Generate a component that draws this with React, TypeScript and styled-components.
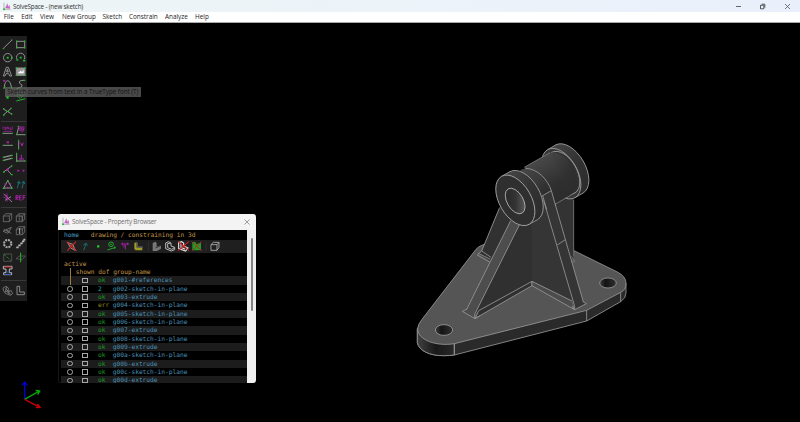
import React from "react";
import styled, { createGlobalStyle } from "styled-components";

const Global = createGlobalStyle`
  * { box-sizing: border-box; }
  body { margin: 0; background: #000; overflow: hidden; }
`;

const UI_FONT = `"Open Sans", "Noto Sans", sans-serif`;

const Shell = styled.div`
  display: flex;
  flex-direction: column;
  width: 800px;
  height: 422px;
  background: #000;
  font-family: ${UI_FONT};
`;
const TitleBar = styled.header`
  display: flex;
  align-items: center;
  height: 12px;
  padding-left: 3px;
  background: linear-gradient(90deg, #edf5f6, #ecf3f9 50%, #e9f0fb);
  font-size: 6.3px;
  color: #333;
`;
const TitleText = styled.span<{ $spacing: number }>`
  flex: 1;
  padding-left: 2px;
  white-space: nowrap;
  letter-spacing: ${(p) => p.$spacing}px;
`;
const WindowButtons = styled.div`
  display: flex;
  align-items: center;
  gap: 17.4px;
  padding-right: 9.5px;
`;
const MenuBar = styled.nav`
  display: flex;
  align-items: center;
  height: 10.5px;
  padding-left: 3.7px;
  background: #fff;
  border-bottom: 0.5px solid #aaa;
  font-size: 6.4px;
  color: #1c1c1c;
`;
const MenuItem = styled.span<{ $w: number }>`
  width: ${(p) => p.$w}px;
  white-space: nowrap;
  line-height: 9px;
`;
const Canvas = styled.main`
  position: relative;
  flex: 1;
  background: #000;
`;
const Model = styled.svg`
  position: absolute;
  left: 410px;
  top: 117.5px;
  width: 220px;
  height: 220px;
`;
const Gizmo = styled.svg`
  position: absolute;
  left: 10px;
  top: 347.5px;
  width: 50px;
  height: 50px;
`;
const Toolbox = styled.aside`
  width: 27.3px;
  height: 265px;
  margin-top: 13.5px;
  padding: 2px 0 0 0.5px;
  background: #1e1e1e;
  float: left;
`;
const ToolGroup = styled.div`
  display: grid;
  grid-template-columns: 13.3px 13.3px;
  grid-auto-rows: 13.35px;
`;
const Divider = styled.hr`
  height: 1px;
  margin: 2.6px 1px 2.7px 0.5px;
  border: 0;
  background: #383838;
`;
const Glyph = styled.svg`
  width: 13px;
  height: 13.35px;
  fill: none;
  stroke-width: 3;
`;
const Tip = styled.div`
  position: absolute;
  left: 5px;
  top: 64px;
  width: 136px;
  height: 10px;
  padding-left: 2.3px;
  background: rgba(106, 106, 106, 0.68);
  color: #141414;
  font-size: 6.3px;
  letter-spacing: -0.04px;
  line-height: 9.5px;
  white-space: nowrap;
`;
const Browser = styled.section`
  position: absolute;
  left: 58px;
  top: 191.5px;
  width: 197.5px;
  height: 169px;
  display: flex;
  flex-direction: column;
  overflow: hidden;
  border-radius: 3px;
  background: #000;
  box-shadow: inset 0 0 0 0.5px #2c2c2c;
`;
const BrowserTitle = styled.header`
  display: flex;
  align-items: center;
  flex: none;
  height: 15.5px;
  padding: 0 6px 0 4px;
  background: #f3f3f3;
  color: #707070;
  font-size: 6.3px;
`;
const BrowserBody = styled.div`
  display: flex;
  flex: 1;
  min-height: 0;
`;
const Listing = styled.div`
  flex: 1;
  padding-left: 2.7px;
  overflow: hidden;
  font: 6.23px/8.33px "DejaVu Sans Mono", monospace;
`;
const Scroll = styled.div`
  width: 9px;
  padding: 8px 0 0 4.2px;
  background: #f0f0f0;
`;
const Thumb = styled.div`
  width: 2px;
  height: 73px;
  border-radius: 1px;
  background: #858585;
`;
const Line = styled.div<{ $indent: number; $h?: number }>`
  display: flex;
  align-items: center;
  height: ${(p) => p.$h ?? 8.33}px;
  padding-left: ${(p) => p.$indent}px;
  color: #c4984a;
  white-space: pre;
`;
const Home = styled.span`
  width: 26.7px;
  color: #4c9fc4;
`;
const IconStrip = styled.div`
  display: flex;
  height: 12.8px;
  margin-bottom: 6.6px;
  background: #1f1f1f;
`;
const Strip = styled.svg`
  width: 160px;
  height: 12.8px;
  fill: none;
`;
const Row = styled.div<{ $odd: boolean }>`
  display: grid;
  grid-template-columns: 16.8px 20.6px 14.6px 1fr;
  align-items: center;
  height: 8.33px;
  background: ${(p) => (p.$odd ? "#1c1c1c" : "#000")};
  white-space: nowrap;
`;
const Mark = styled.span<{ $round?: boolean; $hidden?: boolean }>`
  width: 5.6px;
  height: 5.6px;
  margin-left: ${(p) => (p.$round ? 6.5 : 4.8)}px;
  border: 1.1px solid #a8a8a8;
  border-radius: ${(p) => (p.$round ? "50%" : "0")};
  visibility: ${(p) => (p.$hidden ? "hidden" : "visible")};
`;
const Dof = styled.span<{ $c: string }>`
  color: ${(p) => p.$c};
`;
const Name = styled.span`
  color: #4a92b8;
`;
const ActiveBar = styled.i`
  position: absolute;
  left: 12.1px;
  top: 53.5px;
  width: 1px;
  height: 17px;
  background: #a07c38;
`;

const G = "#22b52e";
const W = "#909090";
const M = "#b022b0";

const Logo = () => (
  <svg width="8" height="9" viewBox="0 0 24 27" fill="none">
    <path d="M3 2V22H23" stroke="#999" strokeWidth="2" />
    <path d="M7 19L13 5L16 19M14 19L19 10L21 19Z" fill="#c568c8" stroke="#b85cbc" />
    <circle cx="3" cy="22" r="3" fill="#28b52c" />
  </svg>
);

const cube = (
  <path d="M7 15L15 8H32V24L25 32H7ZM7 15H25V32M25 15L32 8" stroke="#7a7a7a" strokeWidth="2.2" />
);

const tools: React.ReactNode[][] = [
  [
    <><path d="M7 31L33 6" stroke={W} /><path d="M5 32h5M30 6h4" stroke={G} /></>,
    <><rect x="8" y="10" width="24" height="19" stroke={W} /><path d="M6 10h4M30 10h4M6 29h4M30 29h4" stroke={G} strokeWidth="5" /></>,
    <><circle cx="20" cy="20" r="12.5" stroke={W} /><path d="M17 20h6M31 20h4" stroke={G} strokeWidth="6" /></>,
    <><path d="M9 25A12.5 12.5 0 1 1 31 25" stroke={W} /><path d="M17 20h6M7 27h6M27 29h7" stroke={G} strokeWidth="5" /></>,
    <path d="M7 33L16 7H22L32 33H26L23 26H15L12 33ZM17 21L19 13L22 21Z" stroke="#aaa" strokeWidth="2.4" />,
    <><rect x="7" y="9" width="26" height="22" fill="#999" stroke={W} /><path d="M11 25L20 17L24 21L29 14V25Z" fill="#fff" /><path d="M5 9h5M30 9h5M5 31h5M30 31h5" stroke={G} strokeWidth="4" /></>,
    <><path d="M9 31Q12 8 20 8T32 31" stroke={W} /><path d="M8 33l4-8M30 24l4 8" stroke={G} /><path d="M6 8h7M9 5v7" stroke={M} /></>,
    <><path d="M32 7Q12 6 17 16Q35 25 10 31" stroke={W} /><path d="M28 7h6M7 31h6" stroke={G} /></>,
    <path d="M16 19h7" stroke="#10c81c" strokeWidth="8" />,
    <><circle cx="18" cy="13" r="8" stroke={G} strokeDasharray="4 2" /><path d="M16 13h5" stroke={G} /><path d="M7 30L34 23" stroke={G} /></>,
    <><path d="M7 12L32 27M8 29L31 10" stroke={W} /><path d="M16 19h8M6 11h4M30 27h4M28 10h4M6 30h5" stroke={G} strokeWidth="4" /></>,
  ],
  [
    <><path d="M6 7v9M34 7v9M7 22H34" stroke={M} strokeWidth="2" /><path d="M10 10h4v6h-4M18 16v-6h4v6M27 10v6h5" stroke={M} strokeWidth="2.5" /><path d="M6 28H34" stroke={W} /><path d="M4 28h4M32 28h4" stroke={G} /></>,
    <><path d="M8 32L14 10M8 32H33" stroke={W} /><path d="M11 9h21M17 19v-7h6v7h-6M27 10v10M22 24q9-2 8-12" stroke={M} strokeWidth="2.5" /><path d="M6 32h4M11 7h5M31 32h4" stroke={G} /></>,
    <><path d="M7 22H33" stroke={W} /><path d="M18 16v-6M22 10v6M18 13h4" stroke={M} /><path d="M5 22h5M31 22h5" stroke={G} /></>,
    <><path d="M14 8V32" stroke={W} /><path d="M20 14l4 10l4-10" stroke={M} /><path d="M14 5v5M14 30v5" stroke={G} /></>,
    <><path d="M7 19L32 13M7 28L32 22" stroke={W} strokeWidth="4" /><path d="M5 19h6M30 13h6M5 28h6M30 22h6" stroke={G} /></>,
    <><path d="M8 8V30H33" stroke={W} /><path d="M22 11v13M15 24h15" stroke={M} /><path d="M8 5v5M6 31h5M31 30h5" stroke={G} /></>,
    <><path d="M9 23L32 6M17 16L32 32" stroke={W} /><path d="M15 17h8" stroke={M} strokeWidth="5" /><path d="M30 6h4M29 32h6M6 24h5" stroke={G} strokeWidth="4" /></>,
    <path d="M10 20h6M12 17v6M26 20h6M28 17v6" stroke={M} />,
    <><path d="M20 8L8 30H33Z" stroke={W} /><path d="M10 18l6 3M25 20l6-3M20 26v7" stroke={M} /><path d="M18 8h5M5 31h6M30 31h5" stroke={G} strokeWidth="4" /></>,
    <path d="M10 31L15 11M24 31L29 11M9 15l7-5l2 8M23 15l7-5l2 8" stroke="#176d72" />,
    <><path d="M8 9L33 33M12 28L30 17" stroke={W} /><path d="M7 18L30 28M18 7v25M10 10l10 6" stroke={M} strokeWidth="2.3" /></>,
    <path d="M6 27V14h6v6H6l6 7M23 14h-7v13h7M16 20h6M27 27V14h7M27 20h6" stroke={M} strokeWidth="2.7" />,
  ],
  [
    cube,
    <>{cube}<path d="M16 10v20M20 17h5v10h-5" stroke="#777" strokeWidth="2" /></>,
    <path d="M6 22L31 10L21 28L6 22M17 17L31 29M8 16L25 25" stroke="#777" strokeWidth="2.5" />,
    <>{cube}<path d="M17 12v18" stroke="#aaa" /></>,
    <circle cx="20" cy="20" r="11" stroke="#aaa" strokeWidth="6" strokeDasharray="6 2.6" />,
    <path d="M7 31h7M13 25h7M19 19h7M24 13h7M28 8h6" stroke="#bbb" strokeWidth="5" />,
    <><path d="M8 9H32V31H8Z" stroke="#4c4c4c" /><path d="M9 10L31 30" stroke={G} strokeDasharray="3 3" /></>,
    <><path d="M6 23L16 15H34L24 26Z" stroke="#666" strokeWidth="2" /><path d="M20 5V34" stroke={G} /></>,
    <><path d="M7 7H33V15H25V26H32V32H8V26H15V15H7Z" stroke="#bbb" /><path d="M9 9H31" stroke="#c22" /><path d="M15 24H25M10 31H30" stroke="#35b" /></>,
  ],
  [
    <path d="M6 12L15 7L23 13L20 22L31 20L35 29L28 34L13 28L8 21ZM14 13L23 24M12 20L30 31M17 8L13 25M25 20L23 31" stroke="#858585" strokeWidth="2.3" />,
    <path d="M9 7H17V24H31V32H9Z" stroke="#999" strokeWidth="2.6" />,
  ],
];

const menus: [string, number][] = [
  ["File", 17.6], ["Edit", 18.7], ["View", 22], ["New Group", 40.5],
  ["Sketch", 26.5], ["Constrain", 36], ["Analyze", 30], ["Help", 20],
];

const groups: [string, string][] = [
  ["ok", "g001-#references"], ["2", "g002-sketch-in-plane"], ["ok", "g003-extrude"],
  ["err", "g004-sketch-in-plane"], ["ok", "g005-sketch-in-plane"], ["ok", "g006-sketch-in-plane"],
  ["ok", "g007-extrude"], ["ok", "g008-sketch-in-plane"], ["ok", "g009-extrude"],
  ["ok", "g00a-sketch-in-plane"], ["ok", "g00b-extrude"], ["ok", "g00c-sketch-in-plane"],
  ["ok", "g00d-extrude"],
];
const dofColor = (s: string) => (s === "ok" ? "#1a9c24" : s === "err" ? "#8f8a14" : "#18a8a8");

/* Disc seen along the bore axis, which rises to the right at 30 degrees. */
const Disc = ({ x, y, r, fill, stroke = "#9c9c9c" }: { x: number; y: number; r: number; fill: string; stroke?: string }) => (
  <ellipse cx={x} cy={y} rx={r * 0.577} ry={r} transform={`rotate(-30 ${x} ${y})`} fill={fill} stroke={stroke} />
);

const Bracket = () => (
  <Model viewBox="0 0 660 660" fill="none" stroke="#989898" strokeWidth="2.5" strokeLinejoin="round">
    <defs>
      <linearGradient id="tube" gradientUnits="userSpaceOnUse" x1="370" y1="60" x2="440" y2="185">
        <stop offset="0" stopColor="#494949" /><stop offset=".35" stopColor="#3c3c3c" /><stop offset=".65" stopColor="#303030" /><stop offset="1" stopColor="#2c2c2c" />
      </linearGradient>
      <linearGradient id="rim" gradientUnits="userSpaceOnUse" x1="285" y1="95" x2="375" y2="250">
        <stop offset="0" stopColor="#484848" /><stop offset=".5" stopColor="#343434" /><stop offset="1" stopColor="#2a2a2a" />
      </linearGradient>
      <linearGradient id="rimBack" gradientUnits="userSpaceOnUse" x1="425" y1="15" x2="515" y2="170">
        <stop offset="0" stopColor="#484848" /><stop offset=".5" stopColor="#343434" /><stop offset="1" stopColor="#2a2a2a" />
      </linearGradient>
      <linearGradient id="bore" x1="0" x2="1" y1="0" y2="1">
        <stop offset="0" stopColor="#252525" /><stop offset=".5" stopColor="#333" /><stop offset="1" stopColor="#666" />
      </linearGradient>
      <linearGradient id="hole"><stop offset="0" stopColor="#3c3c3c" /><stop offset=".35" stopColor="#141414" /><stop offset="1" stopColor="#303030" /></linearGradient>
      <linearGradient id="corner"><stop offset="0" stopColor="#424242" /><stop offset=".5" stopColor="#181818" /><stop offset="1" stopColor="#292929" /></linearGradient>
    </defs>
    <path d="M22 565V608C27 633 60 647 100 647Q119 647 133 645L530 543L632 485Q648 474 648 460V430Z" fill="#2a2a2a" />
    <path d="M22 567V608C27 633 60 647 100 647Q119 647 133 645V611Z" fill="url(#corner)" />
    <path d="M23 568Q22 555 36 538L198 328Q204 321 213 317L350 260L492 332L622 396Q648 409 648 430Q648 450 632 457L530 511L133 611C78 620 25 600 23 568Z" fill="#555" />
    <path d="M133 611V645M530 511V543M632 457V485" />
    <ellipse cx="102" cy="570" rx="26" ry="16" fill="url(#hole)" />
    <ellipse cx="594" cy="429" rx="25" ry="15" fill="url(#hole)" />

    <path d="M268 200L215 333L206 342L243 364L330 240Z" fill="#313131" stroke="none" />
    <path d="M268 205L215 333L243 352M215 333L202 345L238 366M205 340L241 358" />
    <path d="M395 170L492 172V352L480 362L400 250Z" fill="#333" stroke="none" />
    <path d="M491 180V350M484 349L495 364L486 367" stroke="#777" />
    <path d="M326 250L366 220V425L210 510L194 524Z" fill="#303030" stroke="none" />
    <path d="M365 200L400 170L495 490L366 425Z" fill="#353535" stroke="none" />
    <path d="M206 512L366 424V437L196 535Z" fill="#303030" />
    <path d="M366 424L488 484L492 508L366 437Z" fill="#4c4c4c" />
    <path d="M302 242L328 255L194 523V534L157 514L169 508Z" fill="#4d4d4d" stroke="none" />
    <path d="M302 242L169 510M328 255L194 523V534M169 508L157 514L195 536L210 527" />
    <path d="M397 168L418 153L424 152L520 486L529 491L494 509Z" fill="#353535" stroke="none" />
    <path d="M397 168L494 499V509L529 491L520 486L424 152M442 315L466 299M486 498L494 509" />

    <Disc x={478} y={87} r={83} fill="url(#rimBack)" />
    <path d="M412.500 29L436.500 15L519.500 159L495.500 173Z" fill="url(#rimBack)" stroke="none" />
    <Disc x={454} y={101} r={83} fill="#383838" />
    <path d="M412.500 29L436.500 15M495.500 173L519.500 159" />
    <Disc x={460} y={98} r={70} fill="#303030" />
    <Disc x={453} y={100} r={69} fill="url(#tube)" stroke="none" />
    <path d="M343 81L419 38L489 160L413 203Z" fill="url(#tube)" stroke="none" />
    <path d="M420 38L343 82M435 193L489 162" stroke="#777" />
    <path d="M397 167L424 152L436 193L412 207Z" fill="#353535" stroke="none" />
    <path d="M398 167L410 208M424 152L437 198" />
    <path d="M330 90L350 84C385 86 413 119 424 151L398 167Z" fill="url(#tube)" stroke="none" />
    <path d="M346 85C383 85 414 120 424 152L396 168" />

    <Disc x={341} y={167} r={83} fill="url(#rim)" />
    <path d="M274.500 109L299.500 95L382.500 239L357.500 253Z" fill="url(#rim)" stroke="none" />
    <path d="M274.500 109L299.500 95M357.500 253L382.500 239" />
    <Disc x={316} y={181} r={83} fill="#2f2f2f" stroke="#a8a8a8" />
    <Disc x={315.5} y={183} r={42} fill="url(#bore)" stroke="#b0b0b0" />
  </Model>
);

const PropertyBrowser = () => (
  <Browser>
    <BrowserTitle>
      <Logo />
      <TitleText $spacing={-0.18}>SolveSpace - Property Browser</TitleText>
      <svg width="6" height="6" viewBox="0 0 6 6"><path d="M.5.5l5 5M5.5.5l-5 5" stroke="#777" strokeWidth=".7" /></svg>
    </BrowserTitle>
    <BrowserBody>
      <Listing>
        <Line $indent={3.3} $h={10.7}><Home>home</Home>drawing / constraining in 3d</Line>
        <IconStrip>
          <Strip viewBox="20 90 480 38.4" strokeWidth="2.7">
            <path d="M40 98L55 103L63 121L49 114Z" stroke="#aaa" /><path d="M37 95L66 123M65 95L39 122" stroke="#d62828" strokeWidth="3.2" />
            <path d="M88 121L95 101M87 105l9-5l3 7" stroke="#17787b" />
            <path d="M128 109h7" stroke="#20c52a" strokeWidth="7" />
            <circle cx="170" cy="103" r="7" stroke={G} /><path d="M167 103h6M159 120L184 112M181 109v8" stroke={G} />
            <path d="M201 102h23M204 98v8M220 98v7M208 112q0-7 5-7v13" stroke={M} />
            <path d="M240 99L247 96V112H264V121H244L240 117Z" fill="#a19a26" /><path d="M249 98V111H265" stroke="#555" strokeWidth="4" />
            <path d="M282 95V123" stroke="#363636" strokeWidth="2" />
            <path d="M295 99L303 95L307 99V110L320 107V116L308 123H295Z" fill="#777" /><path d="M303 114L319 107" stroke="#333" />
            <path d="M334 99L342 95L350 99V108L361 112V119L351 123L334 116ZM340 101V113L352 118L360 113M340 101L349 99" stroke="#bbb" strokeWidth="3" />
            <path d="M373 98L382 95L388 99V108L401 114L394 123L373 116ZM380 101V112L393 118" stroke="#ddd" strokeWidth="3.5" /><path d="M372 95L404 122M403 95L372 122" stroke="#d22" strokeWidth="3.2" />
            <path d="M414 97L422 95L427 103L440 97V121H414Z" fill="#219b28" /><path d="M412 95L443 122M442 95L414 122" stroke="#b22" />
            <path d="M455 95V123" stroke="#363636" strokeWidth="2" />
            <path d="M470 104L477 97H494V112L488 121H470ZM470 104H488V121M488 104L494 97" stroke="#aaa" />
          </Strip>
        </IconStrip>
        <Line $indent={3.3}>active</Line>
        <Line $indent={15}>shown dof group-name</Line>
        {groups.map(([dof, name], i) => (
          <Row key={name} $odd={i % 2 === 0}>
            <Mark $round $hidden={i === 0} />
            <Mark />
            <Dof $c={dofColor(dof)}>{dof}</Dof>
            <Name>{name}</Name>
          </Row>
        ))}
        <ActiveBar />
      </Listing>
      <Scroll><Thumb /></Scroll>
    </BrowserBody>
  </Browser>
);

export default function App() {
  return (
    <Shell>
      <Global />
      <TitleBar>
        <Logo />
        <TitleText $spacing={-0.19}>SolveSpace - (new sketch)</TitleText>
        <WindowButtons>
          <svg width="7" height="7" viewBox="0 0 7 7"><path d="M1 3.5h5" stroke="#444" strokeWidth=".8" /></svg>
          <svg width="7" height="7" viewBox="0 0 7 7" fill="none" stroke="#333" strokeWidth=".8"><path d="M1.500 2.300h3.300v3.500H1.500zM2.500 1.200h3.300v3.500" /></svg>
          <svg width="7" height="7" viewBox="0 0 7 7"><path d="M1 1l5 5M6 1l-5 5" stroke="#444" strokeWidth=".7" /></svg>
        </WindowButtons>
      </TitleBar>
      <MenuBar>
        {menus.map(([m, w]) => <MenuItem key={m} $w={w}>{m}</MenuItem>)}
      </MenuBar>
      <Canvas>
        <Toolbox>
          {tools.map((g, i) => (
            <React.Fragment key={i}>
              {i > 0 && <Divider />}
              <ToolGroup>
                {g.map((t, j) => <Glyph key={j} viewBox="0 0 39 40">{t}</Glyph>)}
              </ToolGroup>
            </React.Fragment>
          ))}
        </Toolbox>
        <Tip>Sketch curves from text in a TrueType font (T)</Tip>
        <Bracket />
        <PropertyBrowser />
        <Gizmo viewBox="0 0 150 150" fill="none" strokeWidth="4">
          <path d="M44 88V37M36 46L44 36L52 46" stroke="#0000d8" />
          <path d="M44 88L88 63M77 61L89 63L83 74" stroke="#00b400" />
          <path d="M44 88L89 112M82 102L90 112L78 113" stroke="#c80000" />
        </Gizmo>
      </Canvas>
    </Shell>
  );
}
